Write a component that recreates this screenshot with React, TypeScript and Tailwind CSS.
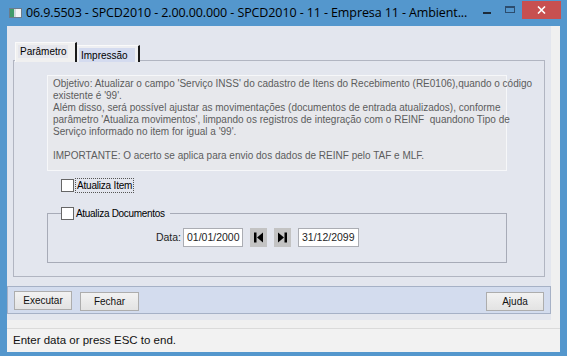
import React from "react";

const tahoma = "font-['Liberation_Sans',Arial,sans-serif]";

const description = [
  "Objetivo: Atualizar o campo 'Serviço INSS' do cadastro de Itens do Recebimento (RE0106),quando o código",
  "existente é '99'.",
  "Além disso, será possível ajustar as movimentações (documentos de entrada atualizados), conforme",
  "parâmetro 'Atualiza movimentos', limpando os registros de integração com o REINF\u00a0 quandono Tipo de",
  "Serviço informado no item for igual a '99'.",
  "",
  "IMPORTANTE: O acerto se aplica para envio dos dados de REINF pelo TAF e MLF.",
];

function Checkbox() {
  return <span className="inline-block h-[13px] w-[13px] shrink-0 border border-[#666] bg-white" />;
}

function NavButton({ dir }: { dir: "first" | "last" }) {
  return (
    <button className="flex h-[19px] w-[17px] items-center justify-center bg-[#c3c3c3]">
      <svg width="17" height="19" viewBox="0 0 17 19">
        {dir === "first" ? (
          <>
            <rect x="4" y="4.5" width="2.5" height="10" fill="#000" />
            <polygon points="13,4.5 7,9.5 13,14.5" fill="#000" />
          </>
        ) : (
          <>
            <polygon points="4,4.5 10,9.5 4,14.5" fill="#000" />
            <rect x="10.5" y="4.5" width="2.5" height="10" fill="#000" />
          </>
        )}
      </svg>
    </button>
  );
}

function DateInput({ value, width }: { value: string; width: string }) {
  return (
    <div
      className={`${width} flex h-[19px] items-center border border-[#abadb3] bg-white pl-[3px] text-[10.5px] text-[#1e1e1e]`}
    >
      {value}
    </div>
  );
}

function BarButton({ label, width }: { label: string; width: string }) {
  return (
    <button
      className={`${width} h-[19px] border border-[#adadad] bg-gradient-to-b from-[#f2f2f2] to-[#e3e3e3] text-[10px] text-[#111]`}
    >
      {label}
    </button>
  );
}

export default function App() {
  return (
    <div className={`flex h-[356px] w-[567px] flex-col bg-[#5497cd] ${tahoma}`}>
      {/* title bar */}
      <div className="flex h-[26px] items-center">
        <svg className="ml-[9px] mr-[4px]" width="13" height="10" viewBox="0 0 13 10">
          <rect x="0.5" y="0.5" width="12" height="9" fill="#f4f4f4" stroke="#6b7c8c" />
          <rect x="1" y="1" width="4" height="8" fill="#3f9b6a" />
          <rect x="5" y="1" width="2" height="8" fill="#cfd8dc" />
        </svg>
        <span className="whitespace-nowrap font-['Open_Sans',sans-serif] text-[12.5px] tracking-[-0.1px] text-black">
          06.9.5503 - SPCD2010 - 2.00.00.000 - SPCD2010 - 11 - Empresa 11 - Ambient...
        </span>
        <div className="ml-auto flex h-full items-start">
          <div className="mt-[12px] h-[2px] w-[8px] bg-[#1d2b3a]" />
          <div className="ml-[14px] mt-[6px] h-[7px] w-[10px] border border-[#2c4d6e] border-t-2" />
          <div className="ml-[7px] mr-[6px] mt-px flex h-[18px] w-[39px] items-center justify-center bg-[#c75050]">
            <svg width="9" height="8" viewBox="0 0 9 8">
              <path d="M1 0.5 L8 7.5 M8 0.5 L1 7.5" stroke="#fff" strokeWidth="1.6" />
            </svg>
          </div>
        </div>
      </div>

      {/* client area */}
      <div className="mx-[7px] mb-[4px] flex flex-1 flex-col bg-[#f0f0f0]">
        <div className="flex h-[294px] w-[544px] flex-col bg-[#e3e6ee]">
          {/* tabs */}
          <div className="relative z-10 ml-[8px] mt-[16px] flex h-[20px] items-end">
            <div className="flex h-[20px] w-[62px] items-start border-l border-t border-[#fafafa] border-r-2 border-r-[#1a1a1a] bg-[#f0f0f0] pl-[2px] pt-[2px]">
              <span className="w-[50px] bg-[#e6e7ed] px-[2px] text-[10px] leading-[13px] text-black">Parâmetro</span>
            </div>
            <div className="flex h-[17px] w-[63px] items-start border-t border-[#fafafa] border-r-2 border-r-[#1a1a1a] bg-[#eeeff2] pl-[2px] pt-[2px]">
              <span className="w-[56px] bg-[#d4dbef] px-[2px] pt-px text-[10px] leading-[13px] text-black">Impressão</span>
            </div>
          </div>

          {/* tab page */}
          <div className="-mt-[2px] ml-[6px] flex h-[217px] w-[532px] flex-col border border-[#b1b5c1]">
            <div className="ml-[33px] mt-[14px] h-[96px] w-[460px] border border-[#f6f7f9] bg-[#e7e8ec] px-[5px] pt-[2px] text-[10px] leading-[12px] text-[#5c5c5c]">
              {description.map((line, i) => (
                <div key={i} className="h-[12px] whitespace-nowrap">
                  {line}
                </div>
              ))}
            </div>

            <div className="ml-[47px] mt-[7px] flex h-[15px] items-center">
              <Checkbox />
              <span className="ml-px border border-dotted border-[#555] px-px text-[10px] leading-[13px] tracking-[-0.2px] text-black">
                Atualiza Item
              </span>
            </div>

            <fieldset className="ml-[33px] mt-[14px] h-[56px] w-[460px] border border-[#a7abb7]">
              <legend className="ml-[13px] flex items-center pr-[5px]">
                <Checkbox />
                <span className="ml-[2px] text-[10px] leading-[13px] tracking-[-0.3px] text-black">
                  Atualiza Documentos
                </span>
              </legend>
              <div className="mt-[8px] flex items-center text-[10.5px]">
                <span className="mr-[2px] w-[133px] text-right text-[#1e1e1e]">Data:</span>
                <DateInput value="01/01/2000" width="w-[60px]" />
                <div className="ml-[7px]">
                  <NavButton dir="first" />
                </div>
                <div className="ml-[7px]">
                  <NavButton dir="last" />
                </div>
                <div className="ml-[7px]">
                  <DateInput value="31/12/2099" width="w-[61px]" />
                </div>
              </div>
            </fieldset>
          </div>

          {/* button bar */}
          <div className="mt-[9px] flex h-[28px] items-center border border-[#a6b1c6] bg-[#d3dcee] px-[6px]">
            <BarButton label="Executar" width="w-[58px]" />
            <div className="ml-[8px]">
              <BarButton label="Fechar" width="w-[59px]" />
            </div>
            <div className="ml-auto">
              <BarButton label="Ajuda" width="w-[58px]" />
            </div>
          </div>
        </div>

        {/* status bar */}
        <div className="mt-[8px] flex flex-1 items-center border-t border-[#dadada] bg-[#f2f2f2] pl-[6px] text-[11.5px] text-[#111]">
          Enter data or press ESC to end.
        </div>
      </div>
    </div>
  );
}
